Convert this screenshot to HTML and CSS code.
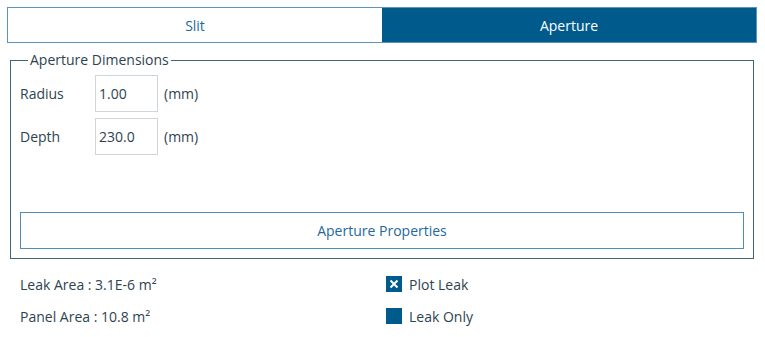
FILE: index.html
```html
<!DOCTYPE html>
<html lang="en">
  <head>
    <meta charset="UTF-8" />
    <meta name="viewport" content="width=device-width, initial-scale=1.0" />
    <title>Aperture</title>
    <link rel="stylesheet" href="styles.css">
  </head>
  <body>
    <div class="panel">
      <!-- Mode tabs -->
      <div class="tabs">
        <div class="tab">Slit</div>
        <div class="tab active">Aperture</div>
      </div>

      <!-- Aperture group -->
      <fieldset class="group">
        <legend>Aperture Dimensions</legend>
        <div class="field">
          <label>Radius</label>
          <input type="text" value="1.00" />
          <span class="unit">(mm)</span>
        </div>
        <div class="field">
          <label>Depth</label>
          <input type="text" value="230.0" />
          <span class="unit">(mm)</span>
        </div>
        <button class="props-btn">Aperture Properties</button>
      </fieldset>

      <!-- Results -->
      <div class="results">
        <div class="result">Leak Area : 3.1E-6 m²</div>
        <div class="check">
          <span class="box checked">
            <svg width="10" height="10" viewBox="0 0 10 10">
              <path d="M1.5 1.5 L8.5 8.5 M8.5 1.5 L1.5 8.5" stroke="#fff" stroke-width="2" />
            </svg>
          </span>
          Plot Leak
        </div>
        <div class="result">Panel Area : 10.8 m²</div>
        <div class="check">
          <span class="box"></span>
          Leak Only
        </div>
      </div>
    </div>
  </body>
</html>
```

FILE: styles.css
```css
/* General Reset */
* {
  margin: 0;
  padding: 0;
  box-sizing: border-box;
}

body {
  background: #fff;
  font-family: "Open Sans", "Noto Sans", sans-serif;
  font-size: 14px;
  color: #2d4450;
}

.panel {
  padding: 7px 8px 0 7px;
}

/* Tabs */
.tabs {
  display: flex;
  height: 36px;
  border: 1px solid #5a93bd;
}

.tab {
  flex: 1;
  display: flex;
  align-items: center;
  justify-content: center;
  color: #24699a;
  background: #fff;
}

.tab.active {
  background: #005b8c;
  color: #fff;
}

/* Group box */
.group {
  margin: 8px 3px 0 3px;
  border: 1px solid #3f6473;
  padding: 6px 9px 9px 9px;
  height: 208px;
  display: flex;
  flex-direction: column;
}

.group legend {
  margin-left: 8px;
  padding: 0 2px;
  font-size: 14px;
  line-height: 18px;
  color: #2d4450;
}

.field {
  display: flex;
  align-items: center;
  height: 37px;
  margin-bottom: 6px;
}

.field label {
  width: 75px;
}

.field input {
  width: 63px;
  height: 37px;
  border: 1px solid #cfd5da;
  padding: 0 3px;
  font: inherit;
  color: #2d4450;
  outline: none;
}

.unit {
  margin-left: 6px;
}

.props-btn {
  margin-top: auto;
  height: 37px;
  border: 1.5px solid #4f8dba;
  background: #fff;
  color: #24699a;
  font: inherit;
}

/* Results */
.results {
  display: grid;
  grid-template-columns: 366px 1fr;
  grid-auto-rows: 32px;
  padding: 9px 0 0 13px;
}

.result,
.check {
  display: flex;
  align-items: center;
}

.box {
  width: 16px;
  height: 16px;
  background: #005b8c;
  margin-right: 7px;
  display: flex;
  align-items: center;
  justify-content: center;
}
```
